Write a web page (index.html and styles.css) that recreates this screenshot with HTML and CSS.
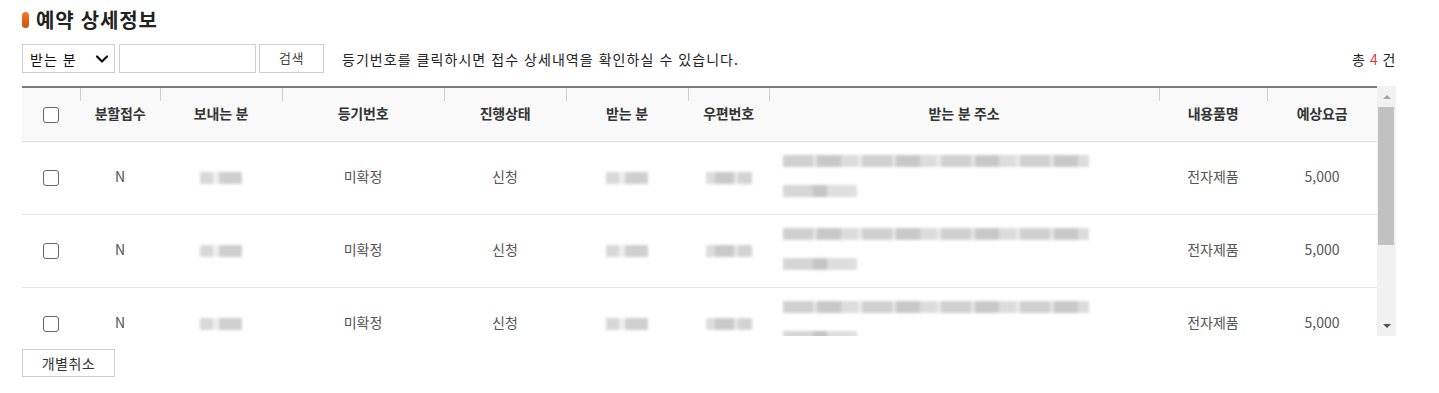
FILE: index.html
```html
<!DOCTYPE html>
<html lang="ko">
<head>
<meta charset="utf-8">
<title>예약 상세정보</title>
<link rel="stylesheet" href="styles.css">
</head>
<body>
<div class="page">
  <h2 class="title"><span class="title-mark"></span>예약 상세정보</h2>
  <div class="search-row">
    <div class="search-left">
      <div class="select">
        <span>받는 분</span>
        <svg class="chev" width="14" height="10" viewBox="0 0 14 10"><path d="M2 2.5 L7 7.5 L12 2.5" fill="none" stroke="#111" stroke-width="2.2" stroke-linecap="round" stroke-linejoin="round"/></svg>
      </div>
      <div class="input"></div>
      <button class="btn btn-search">검색</button>
      <p class="hint">등기번호를 클릭하시면 접수 상세내역을 확인하실 수 있습니다.</p>
    </div>
    <p class="total">총 <em>4</em> 건</p>
  </div>

  <div class="grid-wrap">
    <div class="grid-view">
      <table class="grid">
        <colgroup>
          <col class="c-chk"><col class="c-split"><col class="c-sender"><col class="c-reg"><col class="c-status"><col class="c-recv"><col class="c-zip"><col class="c-addr"><col class="c-item"><col class="c-fee">
        </colgroup>
        <thead>
          <tr>
            <th class="first"><span class="chk"></span></th>
            <th>분할접수</th>
            <th>보내는 분</th>
            <th>등기번호</th>
            <th>진행상태</th>
            <th>받는 분</th>
            <th>우편번호</th>
            <th>받는 분 주소</th>
            <th>내용품명</th>
            <th>예상요금</th>
          </tr>
        </thead>
        <tbody>
          <tr>
            <td><span class="chk"></span></td>
            <td>N</td>
            <td><span class="blur b-name"></span></td>
            <td>미확정</td>
            <td>신청</td>
            <td><span class="blur b-name"></span></td>
            <td><span class="blur b-zip"></span></td>
            <td class="addr"><span class="blur b-addr1"></span><span class="blur b-addr2"></span></td>
            <td>전자제품</td>
            <td>5,000</td>
          </tr>
          <tr>
            <td><span class="chk"></span></td>
            <td>N</td>
            <td><span class="blur b-name"></span></td>
            <td>미확정</td>
            <td>신청</td>
            <td><span class="blur b-name"></span></td>
            <td><span class="blur b-zip"></span></td>
            <td class="addr"><span class="blur b-addr1"></span><span class="blur b-addr2"></span></td>
            <td>전자제품</td>
            <td>5,000</td>
          </tr>
          <tr>
            <td><span class="chk"></span></td>
            <td>N</td>
            <td><span class="blur b-name"></span></td>
            <td>미확정</td>
            <td>신청</td>
            <td><span class="blur b-name"></span></td>
            <td><span class="blur b-zip"></span></td>
            <td class="addr"><span class="blur b-addr1"></span><span class="blur b-addr2"></span></td>
            <td>전자제품</td>
            <td>5,000</td>
          </tr>
        </tbody>
      </table>
    </div>
    <div class="scrollbar">
      <div class="sb-btn"><span class="tri-up"></span></div>
      <div class="sb-track"><div class="sb-thumb"></div></div>
      <div class="sb-btn"><span class="tri-down"></span></div>
    </div>
  </div>

  <button class="btn btn-cancel">개별취소</button>
</div>
</body>
</html>
```
FILE: styles.css
```css
* { box-sizing: border-box; }
html, body { margin: 0; padding: 0; background: #fff; }
body {
  font-family: "Noto Sans CJK KR", "Noto Sans", sans-serif;
  color: #333;
  font-size: 14px;
}
.page {
  width: 1439px;
  padding: 6px 43px 0 22px;
}
.title {
  margin: 0;
  height: 28px;
  line-height: 28px;
  font-size: 20px;
  font-weight: 700;
  color: #222;
  display: flex;
  align-items: center;
  gap: 7px;
  letter-spacing: 0.8px;
}
.title-mark {
  width: 7px;
  height: 16px;
  border-radius: 4px;
  background: linear-gradient(#f07a26, #d34f0a);
}
.search-row {
  margin-top: 10px;
  height: 29px;
  display: flex;
  align-items: center;
  justify-content: space-between;
  width: 1374px;
}
.search-left {
  display: flex;
  align-items: center;
  height: 29px;
}
.select {
  width: 93px;
  height: 29px;
  border: 1px solid #cfcfcf;
  display: flex;
  align-items: center;
  justify-content: space-between;
  padding: 0 5px 0 7px;
  font-size: 14px;
  color: #111;
  line-height: 20px;
  letter-spacing: 1px;
}
.chev { display: block; }
.input {
  width: 137px;
  height: 29px;
  margin-left: 4px;
  border: 1px solid #cfcfcf;
}
.btn {
  font-family: inherit;
  background: #fff;
  border: 1px solid #cfcfcf;
  color: #444;
  font-size: 13px;
  padding: 0 0 1px;
  line-height: 20px;
  letter-spacing: 0.5px;
}
.btn-search {
  width: 65px;
  height: 29px;
  margin-left: 3px;
}
.hint {
  margin: 0 0 0 18px;
  font-size: 14px;
  color: #222;
  line-height: 20px;
  letter-spacing: 1.05px;
}
.total {
  margin: 0;
  font-size: 14px;
  color: #222;
  line-height: 20px;
  letter-spacing: 0.5px;
}
.total em { font-style: normal; color: #e0393b; }

.grid-wrap {
  margin-top: 13px;
  display: flex;
  width: 1374px;
  height: 250px;
}
.grid-view {
  width: 1355px;
  height: 250px;
  overflow: hidden;
}
.grid {
  width: 1355px;
  table-layout: fixed;
  border-collapse: collapse;
  border-top: 2px solid #7a7a7a;
}
.c-chk { width: 58px; }
.c-split { width: 80px; }
.c-sender { width: 122px; }
.c-reg { width: 162px; }
.c-status { width: 122px; }
.c-recv { width: 122px; }
.c-zip { width: 81px; }
.c-addr { width: 390px; }
.c-item { width: 108px; }
.c-fee { width: 110px; }

.grid th {
  position: relative;
  height: 54px;
  background: #f9f9f9;
  border-bottom: 1px solid #dcdcdc;
  font-weight: 700;
  font-size: 14px;
  color: #333;
  text-align: center;
  padding: 0 0 3px;
  line-height: 20px;
  letter-spacing: -0.2px;
}
.grid th::before {
  content: "";
  position: absolute;
  left: 0;
  top: 0;
  width: 1px;
  height: 13px;
  background: #cfcfcf;
}
.grid th.first::before { display: none; }
.grid td {
  height: 73px;
  border-bottom: 1px solid #e3e3e3;
  text-align: center;
  color: #555;
  font-size: 14px;
  padding: 0 0 3px;
  line-height: 20px;
}
.grid td.addr {
  text-align: left;
  padding-left: 14px;
}
.chk {
  display: inline-block;
  width: 16px;
  height: 16px;
  border: 1px solid #666;
  border-radius: 3px;
  background: #fff;
  vertical-align: middle;
}
.blur {
  display: inline-block;
  height: 12px;
  background: #d9d9d9;
  filter: blur(1.5px);
  vertical-align: middle;
}
.b-name { width: 42px; background: linear-gradient(90deg, #d8d8d8 0 30%, #eee 30% 45%, #cfcfcf 45% 100%); }
.b-zip { width: 46px; background: linear-gradient(90deg, #ddd 0 20%, #c9c9c9 20% 60%, #e6e6e6 60% 70%, #d3d3d3 70%); }
.b-addr1 {
  display: block;
  width: 306px;
  margin: 0 0 18px 0;
  background: repeating-linear-gradient(90deg, #d0d0d0 0 30px, #e4e4e4 30px 34px, #c8c8c8 34px 58px, #dcdcdc 58px 75px, #eaeaea 75px 79px);
}
.b-addr2 {
  display: block;
  width: 74px;
  background: linear-gradient(90deg, #d6d6d6 0 40%, #c4c4c4 40% 60%, #dedede 60%);
}

.scrollbar {
  width: 19px;
  height: 250px;
  background: #f1f1f1;
  display: flex;
  flex-direction: column;
}
.sb-btn {
  height: 21px;
  display: flex;
  align-items: center;
  justify-content: center;
}
.sb-track {
  flex: 1;
  padding: 0 2px 0 1px;
}
.sb-thumb {
  height: 138px;
  background: #c1c1c1;
}
.tri-up, .tri-down {
  width: 0; height: 0;
  border-left: 4px solid transparent;
  border-right: 4px solid transparent;
}
.tri-up { border-bottom: 4px solid #a3a3a3; }
.tri-down { border-top: 4px solid #505050; }

.btn-cancel {
  display: block;
  margin-top: 13px;
  width: 93px;
  height: 28px;
  color: #333;
  font-size: 14px;
}
```
